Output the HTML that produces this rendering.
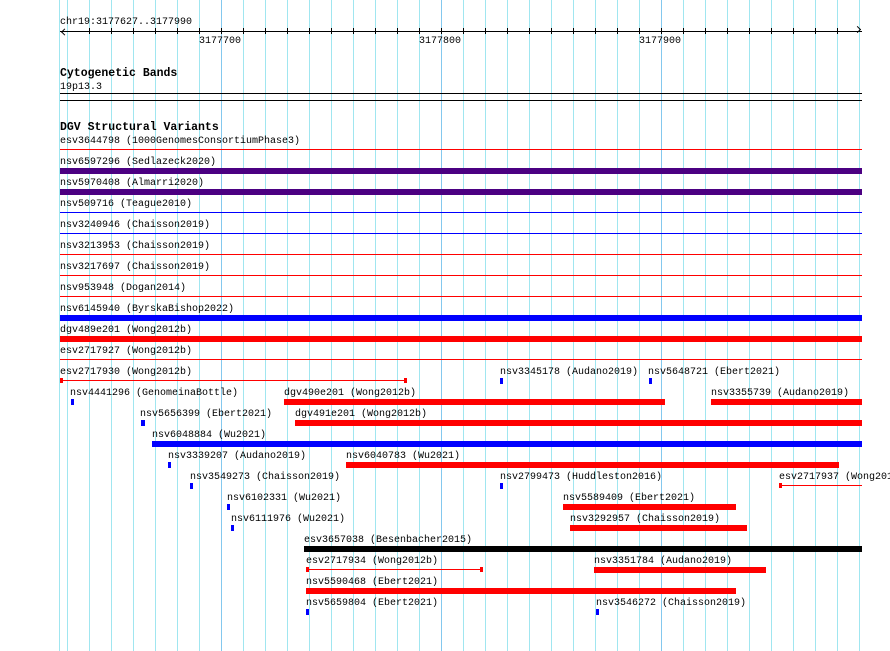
<!DOCTYPE html>
<html><head><meta charset="utf-8"><style>
body{margin:0;width:890px;height:651px;background:#fff;position:relative;overflow:hidden;font-family:"Liberation Mono",monospace;font-size:10px;color:#000}
div{position:absolute}
.g{top:0;height:651px;width:1px;background:#a0e6f0}
.m{top:0;height:651px;width:1px;background:#84c8ee}
.t{white-space:pre;line-height:12px;left:0;padding-top:2px}
.b{font-weight:bold;font-size:11.5px}
.r{background:#f00}.u{background:#00f}.p{background:#4b0082}.k{background:#000}
.tk{width:1px;height:6px;top:28px;background:#000}
</style></head><body>
<div style="left:67px;top:0;width:793px;height:651px;background-image:linear-gradient(to right,#a0e6f0 1px,transparent 1px);background-size:22px 100%;background-repeat:repeat-x"></div>
<div class="g" style="left:59px"></div>
<div class="m" style="left:221px"></div><div class="m" style="left:441px"></div><div class="m" style="left:661px"></div>

<div class="t" style="left:60px;top:15px">chr19:3177627..3177990</div>
<div style="left:60px;top:31px;width:802px;height:1px;background:#000"></div>
<div style="left:61px;top:27px;width:4px;height:4px;border-left:1px solid #000;border-bottom:1px solid #000;transform:rotate(45deg);transform-origin:0 100%"></div>
<div style="left:855px;top:27px;width:4px;height:4px;border-right:1px solid #000;border-top:1px solid #000;transform:rotate(45deg)"></div>
<div class="tk" style="left:89px"></div><div class="tk" style="left:111px"></div><div class="tk" style="left:133px"></div><div class="tk" style="left:155px"></div><div class="tk" style="left:177px"></div><div class="tk" style="left:199px"></div><div class="tk" style="left:221px"></div><div class="tk" style="left:243px"></div><div class="tk" style="left:265px"></div><div class="tk" style="left:287px"></div><div class="tk" style="left:309px"></div><div class="tk" style="left:331px"></div><div class="tk" style="left:353px"></div><div class="tk" style="left:375px"></div><div class="tk" style="left:397px"></div><div class="tk" style="left:419px"></div><div class="tk" style="left:441px"></div><div class="tk" style="left:463px"></div><div class="tk" style="left:485px"></div><div class="tk" style="left:507px"></div><div class="tk" style="left:529px"></div><div class="tk" style="left:551px"></div><div class="tk" style="left:573px"></div><div class="tk" style="left:595px"></div><div class="tk" style="left:617px"></div><div class="tk" style="left:639px"></div><div class="tk" style="left:661px"></div><div class="tk" style="left:683px"></div><div class="tk" style="left:705px"></div><div class="tk" style="left:727px"></div><div class="tk" style="left:749px"></div><div class="tk" style="left:771px"></div><div class="tk" style="left:793px"></div><div class="tk" style="left:815px"></div><div class="tk" style="left:837px"></div>
<div class="t" style="left:199px;top:34px">3177700</div>
<div class="t" style="left:419px;top:34px">3177800</div>
<div class="t" style="left:639px;top:34px">3177900</div>

<div class="t b" style="left:60px;top:66px">Cytogenetic Bands</div>
<div class="t" style="left:60px;top:80px">19p13.3</div>
<div class="k" style="left:60px;top:93px;width:802px;height:1px"></div>
<div class="k" style="left:60px;top:100px;width:802px;height:1px"></div>

<div class="t b" style="left:60px;top:120px">DGV Structural Variants</div>
<div class="t" style="left:60px;top:134px">esv3644798 (1000GenomesConsortiumPhase3)</div>
<div class="r" style="left:60px;top:149px;width:802px;height:1px"></div>
<div class="t" style="left:60px;top:155px">nsv6597296 (Sedlazeck2020)</div>
<div class="p" style="left:60px;top:168px;width:802px;height:6px"></div>
<div class="t" style="left:60px;top:176px">nsv5970408 (Almarri2020)</div>
<div class="p" style="left:60px;top:189px;width:802px;height:6px"></div>
<div class="t" style="left:60px;top:197px">nsv509716 (Teague2010)</div>
<div class="u" style="left:60px;top:212px;width:802px;height:1px"></div>
<div class="t" style="left:60px;top:218px">nsv3240946 (Chaisson2019)</div>
<div class="u" style="left:60px;top:233px;width:802px;height:1px"></div>
<div class="t" style="left:60px;top:239px">nsv3213953 (Chaisson2019)</div>
<div class="r" style="left:60px;top:254px;width:802px;height:1px"></div>
<div class="t" style="left:60px;top:260px">nsv3217697 (Chaisson2019)</div>
<div class="r" style="left:60px;top:275px;width:802px;height:1px"></div>
<div class="t" style="left:60px;top:281px">nsv953948 (Dogan2014)</div>
<div class="r" style="left:60px;top:296px;width:802px;height:1px"></div>
<div class="t" style="left:60px;top:302px">nsv6145940 (ByrskaBishop2022)</div>
<div class="u" style="left:60px;top:315px;width:802px;height:6px"></div>
<div class="t" style="left:60px;top:323px">dgv489e201 (Wong2012b)</div>
<div class="r" style="left:60px;top:336px;width:802px;height:6px"></div>
<div class="t" style="left:60px;top:344px">esv2717927 (Wong2012b)</div>
<div class="r" style="left:60px;top:359px;width:802px;height:1px"></div>

<div class="t" style="left:60px;top:365px">esv2717930 (Wong2012b)</div>
<div class="r" style="left:60px;top:380px;width:347px;height:1px"></div>
<div class="r" style="left:60px;top:378px;width:3px;height:5px"></div>
<div class="r" style="left:404px;top:378px;width:3px;height:5px"></div>
<div class="t" style="left:500px;top:365px">nsv3345178 (Audano2019)</div>
<div class="u" style="left:500px;top:378px;width:3px;height:6px"></div>
<div class="t" style="left:648px;top:365px">nsv5648721 (Ebert2021)</div>
<div class="u" style="left:649px;top:378px;width:3px;height:6px"></div>

<div class="t" style="left:70px;top:386px">nsv4441296 (GenomeinaBottle)</div>
<div class="u" style="left:71px;top:399px;width:3px;height:6px"></div>
<div class="t" style="left:284px;top:386px">dgv490e201 (Wong2012b)</div>
<div class="r" style="left:284px;top:399px;width:381px;height:6px"></div>
<div class="t" style="left:711px;top:386px">nsv3355739 (Audano2019)</div>
<div class="r" style="left:711px;top:399px;width:151px;height:6px"></div>

<div class="t" style="left:140px;top:407px">nsv5656399 (Ebert2021)</div>
<div class="u" style="left:141px;top:420px;width:4px;height:6px"></div>
<div class="t" style="left:295px;top:407px">dgv491e201 (Wong2012b)</div>
<div class="r" style="left:295px;top:420px;width:567px;height:6px"></div>

<div class="t" style="left:152px;top:428px">nsv6048884 (Wu2021)</div>
<div class="u" style="left:152px;top:441px;width:710px;height:6px"></div>

<div class="t" style="left:168px;top:449px">nsv3339207 (Audano2019)</div>
<div class="u" style="left:168px;top:462px;width:3px;height:6px"></div>
<div class="t" style="left:346px;top:449px">nsv6040783 (Wu2021)</div>
<div class="r" style="left:346px;top:462px;width:493px;height:6px"></div>

<div class="t" style="left:190px;top:470px">nsv3549273 (Chaisson2019)</div>
<div class="u" style="left:190px;top:483px;width:3px;height:6px"></div>
<div class="t" style="left:500px;top:470px">nsv2799473 (Huddleston2016)</div>
<div class="u" style="left:500px;top:483px;width:3px;height:6px"></div>
<div class="t" style="left:779px;top:470px">esv2717937 (Wong2012b)</div>
<div class="r" style="left:779px;top:485px;width:83px;height:1px"></div>
<div class="r" style="left:779px;top:483px;width:3px;height:5px"></div>

<div class="t" style="left:227px;top:491px">nsv6102331 (Wu2021)</div>
<div class="u" style="left:227px;top:504px;width:3px;height:6px"></div>
<div class="t" style="left:563px;top:491px">nsv5589409 (Ebert2021)</div>
<div class="r" style="left:563px;top:504px;width:173px;height:6px"></div>

<div class="t" style="left:231px;top:512px">nsv6111976 (Wu2021)</div>
<div class="u" style="left:231px;top:525px;width:3px;height:6px"></div>
<div class="t" style="left:570px;top:512px">nsv3292957 (Chaisson2019)</div>
<div class="r" style="left:570px;top:525px;width:177px;height:6px"></div>

<div class="t" style="left:304px;top:533px">esv3657038 (Besenbacher2015)</div>
<div class="k" style="left:304px;top:546px;width:558px;height:6px"></div>

<div class="t" style="left:306px;top:554px">esv2717934 (Wong2012b)</div>
<div class="r" style="left:306px;top:569px;width:177px;height:1px"></div>
<div class="r" style="left:306px;top:567px;width:3px;height:5px"></div>
<div class="r" style="left:480px;top:567px;width:3px;height:5px"></div>
<div class="t" style="left:594px;top:554px">nsv3351784 (Audano2019)</div>
<div class="r" style="left:594px;top:567px;width:172px;height:6px"></div>

<div class="t" style="left:306px;top:575px">nsv5590468 (Ebert2021)</div>
<div class="r" style="left:306px;top:588px;width:430px;height:6px"></div>

<div class="t" style="left:306px;top:596px">nsv5659804 (Ebert2021)</div>
<div class="u" style="left:306px;top:609px;width:3px;height:6px"></div>
<div class="t" style="left:596px;top:596px">nsv3546272 (Chaisson2019)</div>
<div class="u" style="left:596px;top:609px;width:3px;height:6px"></div>
</body></html>
